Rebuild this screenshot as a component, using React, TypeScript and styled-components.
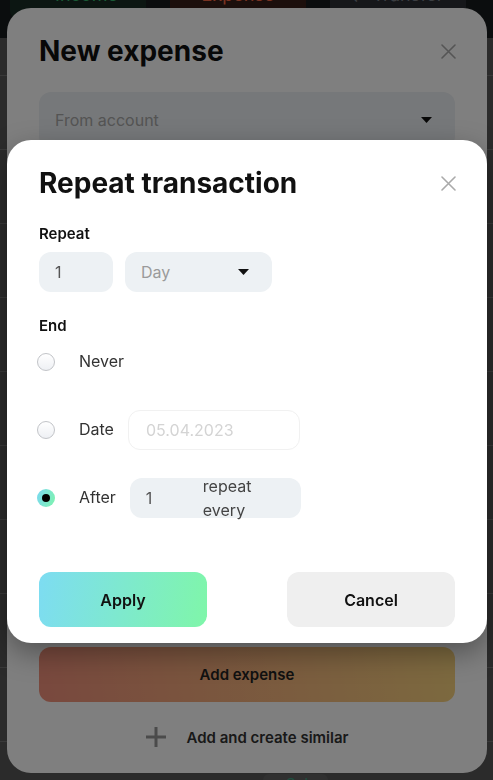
import React from 'react';
import styled, { createGlobalStyle } from 'styled-components';

const GlobalStyle = createGlobalStyle`
  * { box-sizing: border-box; }
  html, body {
    margin: 0;
    padding: 0;
    background: #565656;
    font-family: 'Inter', 'Noto Sans', sans-serif;
    overflow: hidden;
  }
`;

interface CaretProps {
  color?: string;
}

const Caret: React.FC<CaretProps> = ({ color = '#111' }) => (
  <svg width="11" height="6" viewBox="0 0 11 6">
    <path d="M0 0 H11 L5.5 6 Z" fill={color} />
  </svg>
);

const CloseIcon = () => (
  <svg width="15" height="15" viewBox="0 0 15 15">
    <path d="M1 1 L14 14 M14 1 L1 14" stroke="#aaa" strokeWidth="1.6" strokeLinecap="round" />
  </svg>
);

const PlusIcon = () => (
  <svg width="20" height="20" viewBox="0 0 20 20">
    <path d="M10 0 V20 M0 10 H20" stroke="#969696" strokeWidth="3" />
  </svg>
);

// ---------- background page ----------

const Page = styled.div`
  min-height: 780px;
  display: flex;
  flex-direction: column;
`;

const TopBar = styled.div`
  height: 38px;
  background: #161a1c;
  display: flex;
  align-items: flex-start;
  gap: 24px;
  padding: 0 10px;
  overflow: hidden;
`;

const Tab = styled.div<{ $kind: 'income' | 'expense' | 'transfer' }>`
  width: 136px;
  height: 50px;
  margin-top: -31px;
  border-radius: 8px;
  display: flex;
  align-items: center;
  justify-content: center;
  gap: 10px;
  font-size: 18px;
  background: ${p => (p.$kind === 'income' ? '#182c24' : p.$kind === 'expense' ? '#381e18' : '#2c2e34')};
  color: ${p => (p.$kind === 'income' ? '#34b46c' : p.$kind === 'expense' ? '#f46644' : '#787c84')};
`;

const SectionHead = styled.div`
  height: 38px;
  border-bottom: 1px solid #727272;
`;

const Row = styled.div`
  height: 74px;
  border-bottom: 1px solid #727272;
`;

const SetChip = styled.div`
  margin: 32px 0 0 263px;
  width: 65px;
  height: 30px;
  background: #606060;
  border-radius: 6px;
  color: #3ca080;
  font-size: 15px;
  padding-left: 23px;
`;

// ---------- modals ----------

const Dim = styled.div`
  position: fixed;
  inset: 0;
  background: rgba(0, 0, 0, 0.5);
`;

const Sheet = styled.div`
  position: absolute;
  left: 7px;
  width: 480px;
  background: #fff;
  border-radius: 24px;
  padding: 26px 32px 16px;
  display: flex;
  flex-direction: column;
`;

const ExpenseSheet = styled(Sheet)`
  top: 8px;
  height: 765px;
  padding-bottom: 18px;
`;

const RepeatSheet = styled(Sheet)`
  top: 140px;
  box-shadow: 0 10px 28px rgba(0, 0, 0, 0.35);
`;

const HeaderRow = styled.div`
  height: 34px;
  display: flex;
  align-items: center;
  justify-content: space-between;
`;

const Title = styled.h2`
  margin: 0;
  font-size: 28px;
  line-height: 34px;
  font-weight: 700;
  color: #111;
`;

const CloseButton = styled.button`
  border: none;
  background: none;
  padding: 0;
  margin-right: -1px;
  display: flex;
  cursor: pointer;
`;

const Field = styled.div<{ $width?: number }>`
  width: ${p => (p.$width ? `${p.$width}px` : '100%')};
  height: 40px;
  border-radius: 12px;
  background: #edf1f4;
  display: flex;
  align-items: center;
  padding: 0 16px;
  font-size: 16px;
`;

const SelectField = styled(Field)`
  justify-content: space-between;
  padding-right: 23px;
  color: #9a9a9a;
`;

const AccountSelect = styled(SelectField)`
  height: 56px;
  margin-top: 24px;
  color: #a8a8a8;
`;

const Spacer = styled.div`
  flex: 1;
`;

const AddButton = styled.button`
  height: 55px;
  border: none;
  border-radius: 12px;
  background: linear-gradient(80deg, #f2917c, #f9d47f);
  font-family: inherit;
  font-size: 15px;
  font-weight: 600;
  color: #222;
`;

const SimilarRow = styled.div`
  margin-top: 17px;
  height: 36px;
  display: flex;
  align-items: center;
  justify-content: center;
  gap: 21px;
  font-size: 15px;
  font-weight: 600;
  color: #333;
`;

const FieldLabel = styled.div<{ $gap: number }>`
  margin-top: ${p => p.$gap}px;
  font-size: 15px;
  line-height: 20px;
  font-weight: 600;
  color: #111;
`;

const RepeatRow = styled.div`
  margin-top: 8px;
  display: flex;
  gap: 12px;
`;

const NumberInput = styled.input`
  width: 100%;
  border: none;
  outline: none;
  background: transparent;
  padding: 0;
  font-family: inherit;
  font-size: 16px;
  color: #555;
`;

const OptionList = styled.div`
  margin-top: 6px;
  display: flex;
  flex-direction: column;
  gap: 28px;
`;

const OptionRow = styled.label`
  height: 40px;
  display: flex;
  align-items: center;
`;

const Radio = styled.span<{ $checked?: boolean }>`
  position: relative;
  width: 18px;
  height: 18px;
  margin: 0 24px 0 -2px;
  border-radius: 50%;
  flex-shrink: 0;
  border: ${p => (p.$checked ? 'none' : '1px solid #c2c4c8')};
  background: ${p =>
    p.$checked
      ? 'linear-gradient(110deg, #7ad8f2, #7ff4ad)'
      : 'linear-gradient(180deg, #ffffff, #eef0f4)'};

  &::after {
    content: '';
    display: ${p => (p.$checked ? 'block' : 'none')};
    position: absolute;
    left: 5px;
    top: 5px;
    width: 8px;
    height: 8px;
    border-radius: 50%;
    background: #000;
  }
`;

const OptionLabel = styled.span`
  font-size: 16px;
  color: #333;
  margin: -2px 14px 0 0;
`;

const DateInput = styled.input`
  width: 172px;
  height: 40px;
  border: 1px solid #f1f1f1;
  border-radius: 12px;
  outline: none;
  padding: 0 17px;
  font-family: inherit;
  font-size: 16px;
  background: #fff;

  &::placeholder {
    color: #d4d4d4;
  }
`;

const AfterField = styled(Field)`
  gap: 12px;
  color: #444;
`;

const AfterCount = styled(NumberInput)`
  width: 45px;
  flex-shrink: 0;
`;

const AfterUnit = styled.span`
  flex: 1;
  line-height: 24px;
`;

const Actions = styled.div`
  margin-top: 54px;
  display: flex;
  justify-content: space-between;
`;

const ActionButton = styled.button<{ $primary?: boolean }>`
  width: 168px;
  height: 55px;
  border: none;
  border-radius: 12px;
  font-family: inherit;
  font-size: 16px;
  font-weight: 600;
  color: #111;
  cursor: pointer;
  background: ${p => (p.$primary ? 'linear-gradient(100deg, #7ddcf2, #7ff6a9)' : '#efefef')};
`;

const App: React.FC = () => {
  const rows = Array.from({ length: 9 });

  return (
    <>
      <GlobalStyle />
      <Page>
        <TopBar>
          <Tab $kind="income">+ Income</Tab>
          <Tab $kind="expense">Expense</Tab>
          <Tab $kind="transfer">⇄ Transfer</Tab>
        </TopBar>
        <SectionHead />
        {rows.map((_, i) => (
          <Row key={i} />
        ))}
        <SetChip>Set</SetChip>
      </Page>

      <ExpenseSheet>
        <HeaderRow>
          <Title>New expense</Title>
          <CloseButton aria-label="Close">
            <CloseIcon />
          </CloseButton>
        </HeaderRow>
        <AccountSelect>
          From account
          <Caret />
        </AccountSelect>
        <Spacer />
        <AddButton>Add expense</AddButton>
        <SimilarRow>
          <PlusIcon />
          Add and create similar
        </SimilarRow>
      </ExpenseSheet>

      <Dim />

      <RepeatSheet>
        <HeaderRow>
          <Title>Repeat transaction</Title>
          <CloseButton aria-label="Close">
            <CloseIcon />
          </CloseButton>
        </HeaderRow>

        <FieldLabel $gap={24}>Repeat</FieldLabel>
        <RepeatRow>
          <Field $width={74}>
            <NumberInput defaultValue="1" />
          </Field>
          <SelectField $width={147}>
            Day
            <Caret />
          </SelectField>
        </RepeatRow>

        <FieldLabel $gap={24}>End</FieldLabel>
        <OptionList>
          <OptionRow>
            <Radio />
            <OptionLabel>Never</OptionLabel>
          </OptionRow>
          <OptionRow>
            <Radio />
            <OptionLabel>Date</OptionLabel>
            <DateInput placeholder="05.04.2023" />
          </OptionRow>
          <OptionRow>
            <Radio $checked />
            <OptionLabel>After</OptionLabel>
            <AfterField $width={171}>
              <AfterCount defaultValue="1" />
              <AfterUnit>repeat every</AfterUnit>
            </AfterField>
          </OptionRow>
        </OptionList>

        <Actions>
          <ActionButton $primary>Apply</ActionButton>
          <ActionButton>Cancel</ActionButton>
        </Actions>
      </RepeatSheet>
    </>
  );
};

export default App;
